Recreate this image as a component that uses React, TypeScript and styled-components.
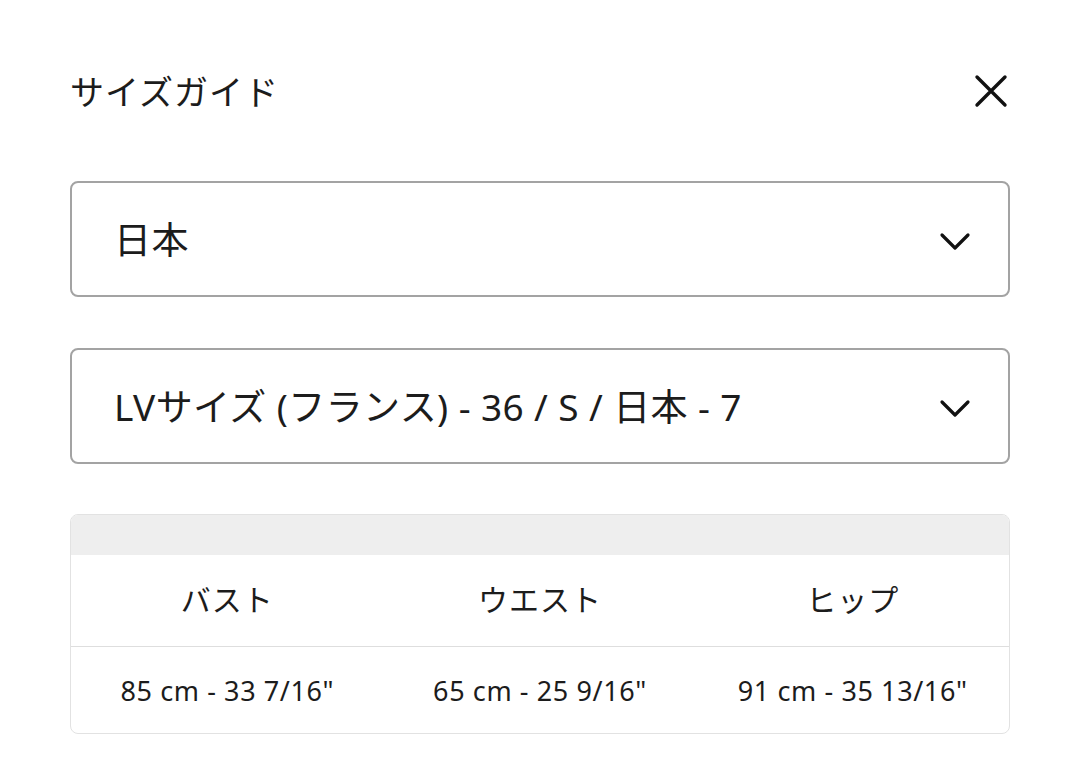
import React from 'react';
import styled, { createGlobalStyle } from 'styled-components';

const GlobalStyle = createGlobalStyle`
  html, body {
    margin: 0;
    padding: 0;
    background: #ffffff;
  }
  body {
    font-family: "Noto Sans", "Noto Sans CJK JP", sans-serif;
    color: #1c1c1c;
  }
`;

const sizes = [
  { label: 'バスト', value: '85 cm - 33 7/16"' },
  { label: 'ウエスト', value: '65 cm - 25 9/16"' },
  { label: 'ヒップ', value: '91 cm - 35 13/16"' },
];

function Chevron() {
  return (
    <ChevronSvg width="34" height="20" viewBox="0 0 34 20" fill="none">
      <path d="M4 3 L17 16 L30 3" stroke="#111" strokeWidth="3.2" strokeLinecap="round" strokeLinejoin="round" />
    </ChevronSvg>
  );
}

function CloseIcon() {
  return (
    <svg width="34" height="34" viewBox="0 0 34 34" fill="none">
      <path d="M3 3 L31 31 M31 3 L3 31" stroke="#111" strokeWidth="3.4" strokeLinecap="round" />
    </svg>
  );
}

export default function App() {
  return (
    <>
      <GlobalStyle />
      <Page>
        <Header>
          <Title>サイズガイド</Title>
          <CloseButton aria-label="close">
            <CloseIcon />
          </CloseButton>
        </Header>

        <Select>
          <SelectText>日本</SelectText>
          <Chevron />
        </Select>

        <Select>
          <SelectText>LVサイズ (フランス) - 36 / S / 日本 - 7</SelectText>
          <Chevron />
        </Select>

        <Table>
          <TableBand />
          <Row>
            {sizes.map((s) => (
              <HeadCell key={s.label}>{s.label}</HeadCell>
            ))}
          </Row>
          <Row last>
            {sizes.map((s) => (
              <ValueCell key={s.label}>{s.value}</ValueCell>
            ))}
          </Row>
        </Table>
      </Page>
    </>
  );
}

const Page = styled.div`
  display: flex;
  flex-direction: column;
  gap: 51px;
  padding: 71px 70px 0 70px;
  width: 1080px;
  box-sizing: border-box;
`;

const Header = styled.div`
  display: flex;
  justify-content: space-between;
  align-items: center;
  height: 40px;
  margin-bottom: 19px;
`;

const Title = styled.h1`
  margin: 0;
  font-family: "Noto Sans CJK JP", sans-serif;
  font-weight: 400;
  font-size: 34px;
  line-height: 1;
  letter-spacing: 1px;
  color: #1c1c1c;
`;

const CloseButton = styled.button`
  display: flex;
  align-items: center;
  justify-content: center;
  padding: 0;
  margin-right: 2px;
  border: none;
  background: none;
  width: 34px;
  height: 34px;
`;

const Select = styled.div`
  display: flex;
  align-items: center;
  justify-content: space-between;
  height: 116px;
  box-sizing: border-box;
  border: 2px solid #a3a3a3;
  border-radius: 8px;
  padding: 0 36px 0 42px;
`;

const SelectText = styled.span`
  font-family: "Noto Sans", "Noto Sans CJK JP", sans-serif;
  font-size: 37px;
  line-height: 1;
  letter-spacing: 0.4px;
  color: #1c1c1c;
`;

const ChevronSvg = styled.svg`
  margin-top: 6px;
`;

const Table = styled.div`
  border: 1px solid #e2e2e2;
  border-radius: 8px;
  overflow: hidden;
  margin-top: -1px;
`;

const TableBand = styled.div`
  height: 40px;
  background: #eeeeee;
`;

const Row = styled.div<{ last?: boolean }>`
  display: grid;
  grid-template-columns: repeat(3, 1fr);
  align-items: center;
  height: ${(p) => (p.last ? '86px' : '91px')};
  border-bottom: ${(p) => (p.last ? 'none' : '1px solid #dedede')};
`;

const HeadCell = styled.div`
  text-align: center;
  font-family: "Noto Sans CJK JP", sans-serif;
  font-size: 30px;
  line-height: 1;
  letter-spacing: 1px;
  color: #1c1c1c;
  padding-bottom: 5px;
`;

const ValueCell = styled.div`
  text-align: center;
  font-family: "Noto Sans", sans-serif;
  font-size: 27px;
  line-height: 1;
  letter-spacing: 0.6px;
  color: #1c1c1c;
`;
